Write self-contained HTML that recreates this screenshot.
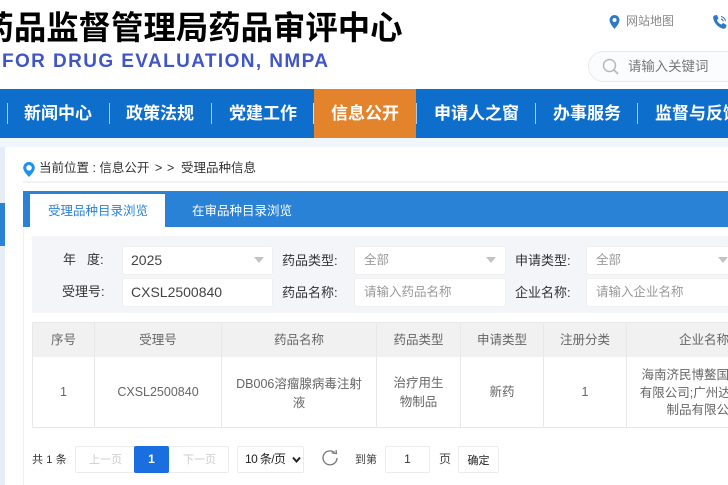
<!DOCTYPE html>
<html lang="zh-CN"><head><meta charset="utf-8">
<style>
html,body{margin:0;padding:0}
body{width:728px;height:485px;overflow:hidden;position:relative;background:#fff;font-family:"Liberation Sans","Noto Sans CJK SC",sans-serif;}
#w{position:absolute;left:0;top:0;width:728px;height:485px;overflow:hidden}
.a{position:absolute;white-space:nowrap}
.box{position:absolute;box-sizing:border-box;background:#fff;border:1px solid #ececec;border-radius:2px}
.lbl{position:absolute;white-space:nowrap;font-size:13px;color:#333;line-height:18px}
.val{position:absolute;white-space:nowrap;font-size:12.5px;line-height:18px;color:#999}
.tri{position:absolute;width:0;height:0;border-left:5.5px solid transparent;border-right:5.5px solid transparent;border-top:6px solid #c4c4c4}
.th,.td{position:absolute;text-align:center;font-size:12.5px;color:#666;line-height:17px}
.vl{position:absolute;width:1px;background:#e8e8e8;top:322px;height:106px}
.sep{position:absolute;top:103px;height:21px;width:1px;background:#a9cbec}
.nv{position:absolute;top:102px;font-size:17px;font-weight:bold;color:#fff;line-height:24px;white-space:nowrap}
.sm{position:absolute;white-space:nowrap;font-size:11px;line-height:17px}
</style></head><body><div id="w">

<div class="a" style="left:-18.5px;top:6px;font-size:32.4px;font-weight:bold;color:#000;line-height:44px">药品监督管理局药品审评中心</div>
<div class="a" style="left:2px;top:50px;font-size:19px;font-weight:bold;color:#3f56c4;letter-spacing:1.4px;line-height:24px">FOR DRUG EVALUATION, NMPA</div>

<svg class="a" style="left:608px;top:14px" width="13" height="16" viewBox="0 0 13 16"><path fill-rule="evenodd" fill="#2f77c9" d="M6.5 1A5 5 0 0 0 1.500 6C1.500 9 4.500 12.500 6.500 15C8.500 12.500 11.500 9 11.500 6A5 5 0 0 0 6.500 1ZM6.500 4A2 2 0 1 1 6.500 8A2 2 0 1 1 6.500 4Z"/></svg>
<div class="a" style="left:626px;top:13px;font-size:12px;color:#888;line-height:17px">网站地图</div>
<svg class="a" style="left:712px;top:14px" width="16" height="16" viewBox="0 0 16 16"><path fill="#2f77c9" d="M2 1.500L5 1L6.500 4.500L5 6C5.500 8 7.500 10 9.500 10.500L11 9L14.500 11L14 13.500C13 15 11 15 9 14C5.500 12.500 2.500 9 1.500 5.500C1 4 1 2.500 2 1.500Z"/><path fill="none" stroke="#2f77c9" stroke-width="1" d="M9 2.500C11.500 3 13 4.500 13.500 7M9 5C10.200 5.300 11 6 11.300 7.200"/></svg>

<div class="a" style="left:588px;top:51px;width:160px;height:31px;box-sizing:border-box;border:1px solid #e8eaee;border-radius:16px;background:#fbfcfe"></div>
<svg class="a" style="left:601px;top:58px" width="20" height="18" viewBox="0 0 20 18"><circle cx="8.500" cy="7.500" r="6" fill="none" stroke="#b9b9b9" stroke-width="1.500"/><path d="M13 12L17 16" stroke="#b9b9b9" stroke-width="1.800"/></svg>
<div class="a" style="left:628px;top:58px;font-size:13.4px;color:#777;line-height:18px">请输入关键词</div>

<div class="a" style="left:0;top:89px;width:728px;height:49px;background:#0d6ecb"></div>
<div class="a" style="left:314px;top:89px;width:102px;height:49px;background:#e3832b"></div>
<div class="sep" style="left:7px"></div><div class="sep" style="left:109px"></div><div class="sep" style="left:211px"></div><div class="sep" style="left:313px;background:#d8e4ee"></div><div class="sep" style="left:416px"></div><div class="sep" style="left:535px"></div><div class="sep" style="left:637px"></div>
<div class="nv" style="left:24px">新闻中心</div><div class="nv" style="left:126px">政策法规</div><div class="nv" style="left:229px">党建工作</div><div class="nv" style="left:331px">信息公开</div><div class="nv" style="left:434px">申请人之窗</div><div class="nv" style="left:553px">办事服务</div><div class="nv" style="left:655px">监督与反馈</div>

<div class="a" style="left:0;top:138px;width:728px;height:9px;background:#f1f5fc"></div>
<div class="a" style="left:0;top:147px;width:5px;height:338px;background:#e7edf7"></div>
<div class="a" style="left:0;top:203px;width:5px;height:43px;background:#2a82d7"></div>

<svg class="a" style="left:22px;top:161px" width="14" height="17" viewBox="0 0 14 17"><path fill-rule="evenodd" fill="#1e90f0" d="M7 1A5.800 5.800 0 0 0 1.200 6.800C1.200 10 4.500 13.500 7 16C9.500 13.500 12.800 10 12.800 6.800A5.800 5.800 0 0 0 7 1ZM7 4A2.800 2.800 0 1 1 7 9.600A2.800 2.800 0 1 1 7 4Z"/></svg>
<div class="a" style="left:39px;top:159px;font-size:12.500px;color:#333;line-height:18px">当前位置 : 信息公开</div>
<div class="a" style="left:155px;top:159px;font-size:12.500px;color:#333;line-height:18px">&gt;</div>
<div class="a" style="left:167px;top:159px;font-size:12.500px;color:#333;line-height:18px">&gt;</div>
<div class="a" style="left:181px;top:159px;font-size:12.500px;color:#333;line-height:18px">受理品种信息</div>
<div class="a" style="left:23px;top:181px;width:705px;height:2px;background:#f2f2f2"></div>

<div class="a" style="left:23px;top:191px;width:705px;height:36px;background:#2a82d7"></div>
<div class="a" style="left:23px;top:227px;width:1px;height:258px;background:#eef1f6"></div>
<div class="a" style="left:30px;top:194px;width:135px;height:33px;background:#fff"></div>
<div class="a" style="left:48px;top:202px;font-size:12.500px;color:#2a82d7;line-height:18px">受理品种目录浏览</div>
<div class="a" style="left:192px;top:202px;font-size:12.500px;color:#fff;line-height:18px">在审品种目录浏览</div>

<div class="a" style="left:32px;top:236px;width:696px;height:77px;background:#f3f5f8"></div>
<div class="box" style="left:122px;top:246px;width:151px;height:29px;border-color:#f0f0f0"></div>
<div class="box" style="left:122px;top:278px;width:151px;height:29px;border-color:#f0f0f0"></div>
<div class="box" style="left:354px;top:246px;width:152px;height:29px;border-color:#f0f0f0"></div>
<div class="box" style="left:354px;top:278px;width:152px;height:29px;border-color:#f0f0f0"></div>
<div class="box" style="left:586px;top:246px;width:142px;height:29px;border-color:#f0f0f0;border-right:0"></div>
<div class="box" style="left:586px;top:278px;width:142px;height:29px;border-color:#f0f0f0;border-right:0"></div>
<div class="tri" style="left:254px;top:257px"></div><div class="tri" style="left:486px;top:257px"></div><div class="tri" style="left:718px;top:257px"></div>

<div class="lbl" style="left:63px;top:251px">年</div><div class="lbl" style="left:87px;top:251px">度:</div>
<div class="lbl" style="left:62px;top:283px">受理号:</div>
<div class="lbl" style="left:282px;top:252px">药品类型:</div>
<div class="lbl" style="left:282px;top:284px">药品名称:</div>
<div class="lbl" style="left:515px;top:252px">申请类型:</div>
<div class="lbl" style="left:515px;top:284px">企业名称:</div>
<div class="val" style="left:131px;top:251px;color:#444;font-size:14px">2025</div>
<div class="val" style="left:131px;top:283px;color:#444;font-size:14px">CXSL2500840</div>
<div class="val" style="left:364px;top:251px">全部</div>
<div class="val" style="left:364px;top:283px">请输入药品名称</div>
<div class="val" style="left:596px;top:251px">全部</div>
<div class="val" style="left:596px;top:283px">请输入企业名称</div>

<div class="a" style="left:32px;top:322px;width:696px;height:35px;background:#f1f1f1"></div>
<div class="a" style="left:32px;top:322px;width:696px;height:1px;background:#e8e8e8"></div>
<div class="a" style="left:32px;top:427px;width:696px;height:1px;background:#e4e4e4"></div>
<div class="vl" style="left:32px"></div><div class="vl" style="left:94px"></div><div class="vl" style="left:221px"></div><div class="vl" style="left:376px"></div><div class="vl" style="left:460px"></div><div class="vl" style="left:543px"></div><div class="vl" style="left:626px"></div>

<div class="th" style="left:33px;width:61px;top:332px">序号</div>
<div class="th" style="left:95px;width:126px;top:332px">受理号</div>
<div class="th" style="left:222px;width:154px;top:332px">药品名称</div>
<div class="th" style="left:377px;width:83px;top:332px">药品类型</div>
<div class="th" style="left:461px;width:82px;top:332px">申请类型</div>
<div class="th" style="left:544px;width:82px;top:332px">注册分类</div>
<div class="a" style="left:627px;width:101px;height:20px;top:332px;overflow:hidden;font-size:12.5px;color:#666;line-height:17px;text-indent:52px">企业名称</div>

<div class="td" style="left:33px;width:61px;top:384px">1</div>
<div class="td" style="left:95px;width:126px;top:384px">CXSL2500840</div>
<div class="td" style="left:222px;width:154px;top:375px;line-height:19px">DB006溶瘤腺病毒注射<br>液</div>
<div class="td" style="left:377px;width:83px;top:374px;line-height:19px">治疗用生<br>物制品</div>
<div class="td" style="left:461px;width:82px;top:384px">新药</div>
<div class="td" style="left:544px;width:82px;top:384px">1</div>
<div class="a" style="left:627px;width:101px;top:367px;height:60px;overflow:hidden;font-size:12.5px;color:#666;line-height:17.500px"><div style="width:154px;text-align:center">海南济民博鳌国际医院<br>有限公司;广州达博生物<br>制品有限公司</div></div>

<div class="sm" style="left:32px;top:452px;color:#333;letter-spacing:.1px">共 1 条</div>
<div class="box" style="left:75px;top:446px;width:154px;height:27px;border-color:#ececec"></div>
<div class="sm" style="left:89px;top:452px;color:#ccc">上一页</div>
<div class="a" style="left:134px;top:446px;width:35px;height:27px;background:#1a6fe0;border-radius:2px;color:#fff;font-size:12px;text-align:center;line-height:27px;font-weight:bold">1</div>
<div class="sm" style="left:183px;top:452px;color:#ccc">下一页</div>
<div class="box" style="left:237px;top:446px;width:67px;height:27px"></div>
<div class="a" style="left:245px;top:451px;font-size:12px;color:#222;line-height:17px;letter-spacing:-.6px">10 条/页</div>
<svg class="a" style="left:291px;top:456px" width="11" height="8" viewBox="0 0 11 8"><path d="M2 1.500L5.500 5.500L9 1.500" fill="none" stroke="#222" stroke-width="2"/></svg>
<svg class="a" style="left:321px;top:449px" width="18" height="18" viewBox="0 0 18 18"><path d="M13.500 3.500A7 7 0 1 0 16 9" fill="none" stroke="#777" stroke-width="1.300"/><path d="M10.500 3.800L15.500 4.500L15 1" fill="none" stroke="#777" stroke-width="1.200"/></svg>
<div class="sm" style="left:355px;top:452px;color:#444">到第</div>
<div class="box" style="left:385px;top:446px;width:45px;height:27px"></div>
<div class="a" style="left:385px;top:451px;width:45px;text-align:center;font-size:12px;color:#333;line-height:17px">1</div>
<div class="a" style="left:439px;top:451px;font-size:12px;color:#444;line-height:17px">页</div>
<div class="box" style="left:458px;top:446px;width:41px;height:27px"></div>
<div class="sm" style="left:458px;top:453px;width:41px;text-align:center;color:#222">确定</div>
</div></body></html>
